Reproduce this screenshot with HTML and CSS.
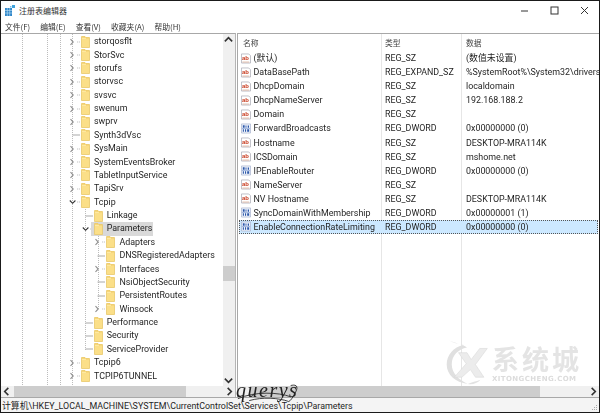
FILE: index.html
```html
<!DOCTYPE html>
<html lang="zh-CN">
<head>
<meta charset="utf-8">
<title>注册表编辑器</title>
<link rel="stylesheet" href="styles.css">
</head>
<body>
<svg class="defs" aria-hidden="true">
  <symbol id="folder" viewBox="0 0 9 12">
    <path d="M0.5 0.5H4L5 1.5H8.5V11.5H0.5Z" fill="#fde9a3" stroke="#e8c667" stroke-width="0.8"/>
    <path d="M1 3H8V11H1Z" fill="#fbdf88"/>
    <path d="M1 1.2H4L5 2.2H8" fill="none" stroke="#f3c95e" stroke-width="0.8"/>
  </symbol>
  <symbol id="closed" viewBox="0 0 13 12">
    <path d="M2.5 3.2L5.2 6L2.5 8.8" fill="none" stroke="#8f8f8f" stroke-width="1.1"/>
    <path d="M9.2 6H12" stroke="#b5b5b5" stroke-width="1" stroke-dasharray="1 1"/>
  </symbol>
  <symbol id="open" viewBox="0 0 13 12">
    <path d="M1.8 4.5L4.6 7.3L7.4 4.5" fill="none" stroke="#333" stroke-width="1.1"/>
    <path d="M9.2 6H12" stroke="#b5b5b5" stroke-width="1" stroke-dasharray="1 1"/>
  </symbol>
  <symbol id="leaf" viewBox="0 0 13 12">
    <path d="M4.5 6H12" stroke="#a9a9a9" stroke-width="1"/>
  </symbol>
  <symbol id="ab" viewBox="0 0 11 11">
    <path d="M0.5 0.5H8.5L10.5 2.5V10.5H0.5Z" fill="#fff" stroke="#a9a9b5" stroke-width="0.8"/>
    <text x="1" y="7.6" class="ab-text">ab</text>
    <path d="M1.5 9.4H9" stroke="#d9a58c" stroke-width="0.8"/>
  </symbol>
  <symbol id="dw" viewBox="0 0 11 11">
    <path d="M0.5 0.5H10.5V10.5H0.5Z" fill="#eef3fb" stroke="#a9b5cf" stroke-width="0.8"/>
    <path d="M2 2H4V4.6H2ZM5 2.3H6V4.6H5ZM7.4 2.3H8.8V4.6H7.4ZM2 6.4H3.2V9H2ZM4.4 6.4H5.6V9H4.4ZM6.8 6.4H9V9H6.8Z" fill="#2a56a8"/>
    <path d="M1 5.5H10" stroke="#7d9ad0" stroke-width="0.7"/>
  </symbol>
</svg>

<div class="window">
  <header class="titlebar">
    <svg class="app-icon" viewBox="0 0 10 11">
      <rect x="0" y="3" width="7" height="8" fill="#2f86c9"/>
      <path d="M0 5.5H7M0 8H7M2.3 3V11M4.7 3V11" stroke="#bfe0f5" stroke-width="0.6"/>
      <rect x="7" y="0" width="3" height="3" fill="#3fa3dc"/>
      <rect x="5" y="1" width="1.5" height="1.5" fill="#74bde6"/>
    </svg>
    <span class="title">注册表编辑器</span>
    <div class="controls">
      <svg class="ctl" viewBox="0 0 9 9"><path d="M1 5H8" stroke="#333"/></svg>
      <svg class="ctl" viewBox="0 0 9 9"><rect x="1" y="1" width="7" height="7" fill="none" stroke="#333"/></svg>
      <svg class="ctl" viewBox="0 0 9 9"><path d="M1 1L8 8M8 1L1 8" stroke="#333"/></svg>
    </div>
  </header>
  <nav class="menubar">
    <span>文件(F)</span><span>编辑(E)</span><span>查看(V)</span><span>收藏夹(A)</span><span>帮助(H)</span>
  </nav>

  <main class="panes">
    <section class="tree-pane">
      <div class="tree-body">
        <div class="tree">
          <div class="node l0"><svg class="exp"><use href="#closed"/></svg><span class="item"><svg class="fld"><use href="#folder"/></svg>storqosflt</span></div>
          <div class="node l0"><svg class="exp"><use href="#closed"/></svg><span class="item"><svg class="fld"><use href="#folder"/></svg>StorSvc</span></div>
          <div class="node l0"><svg class="exp"><use href="#closed"/></svg><span class="item"><svg class="fld"><use href="#folder"/></svg>storufs</span></div>
          <div class="node l0"><svg class="exp"><use href="#closed"/></svg><span class="item"><svg class="fld"><use href="#folder"/></svg>storvsc</span></div>
          <div class="node l0"><svg class="exp"><use href="#closed"/></svg><span class="item"><svg class="fld"><use href="#folder"/></svg>svsvc</span></div>
          <div class="node l0"><svg class="exp"><use href="#closed"/></svg><span class="item"><svg class="fld"><use href="#folder"/></svg>swenum</span></div>
          <div class="node l0"><svg class="exp"><use href="#closed"/></svg><span class="item"><svg class="fld"><use href="#folder"/></svg>swprv</span></div>
          <div class="node l0"><svg class="exp"><use href="#leaf"/></svg><span class="item"><svg class="fld"><use href="#folder"/></svg>Synth3dVsc</span></div>
          <div class="node l0"><svg class="exp"><use href="#closed"/></svg><span class="item"><svg class="fld"><use href="#folder"/></svg>SysMain</span></div>
          <div class="node l0"><svg class="exp"><use href="#closed"/></svg><span class="item"><svg class="fld"><use href="#folder"/></svg>SystemEventsBroker</span></div>
          <div class="node l0"><svg class="exp"><use href="#closed"/></svg><span class="item"><svg class="fld"><use href="#folder"/></svg>TabletInputService</span></div>
          <div class="node l0"><svg class="exp"><use href="#closed"/></svg><span class="item"><svg class="fld"><use href="#folder"/></svg>TapiSrv</span></div>
          <div class="node l0"><svg class="exp"><use href="#open"/></svg><span class="item"><svg class="fld"><use href="#folder"/></svg>Tcpip</span></div>
          <div class="group g1">
            <div class="node l1"><svg class="exp"><use href="#leaf"/></svg><span class="item"><svg class="fld"><use href="#folder"/></svg>Linkage</span></div>
            <div class="node l1"><svg class="exp"><use href="#open"/></svg><span class="item selected"><svg class="fld"><use href="#folder"/></svg>Parameters</span></div>
            <div class="group g2">
              <div class="node l2"><svg class="exp"><use href="#closed"/></svg><span class="item"><svg class="fld"><use href="#folder"/></svg>Adapters</span></div>
              <div class="node l2"><svg class="exp"><use href="#leaf"/></svg><span class="item"><svg class="fld"><use href="#folder"/></svg>DNSRegisteredAdapters</span></div>
              <div class="node l2"><svg class="exp"><use href="#closed"/></svg><span class="item"><svg class="fld"><use href="#folder"/></svg>Interfaces</span></div>
              <div class="node l2"><svg class="exp"><use href="#leaf"/></svg><span class="item"><svg class="fld"><use href="#folder"/></svg>NsiObjectSecurity</span></div>
              <div class="node l2"><svg class="exp"><use href="#leaf"/></svg><span class="item"><svg class="fld"><use href="#folder"/></svg>PersistentRoutes</span></div>
              <div class="node l2"><svg class="exp"><use href="#closed"/></svg><span class="item"><svg class="fld"><use href="#folder"/></svg>Winsock</span></div>
            </div>
            <div class="node l1"><svg class="exp"><use href="#leaf"/></svg><span class="item"><svg class="fld"><use href="#folder"/></svg>Performance</span></div>
            <div class="node l1"><svg class="exp"><use href="#leaf"/></svg><span class="item"><svg class="fld"><use href="#folder"/></svg>Security</span></div>
            <div class="node l1"><svg class="exp"><use href="#leaf"/></svg><span class="item"><svg class="fld"><use href="#folder"/></svg>ServiceProvider</span></div>
          </div>
          <div class="node l0"><svg class="exp"><use href="#closed"/></svg><span class="item"><svg class="fld"><use href="#folder"/></svg>Tcpip6</span></div>
          <div class="node l0"><svg class="exp"><use href="#closed"/></svg><span class="item"><svg class="fld"><use href="#folder"/></svg>TCPIP6TUNNEL</span></div>
        </div>
        <div class="vscroll">
          <svg class="arrow" viewBox="0 0 9 9"><path d="M1.5 6L4.5 3L7.5 6" fill="none" stroke="#333" stroke-width="1.3"/></svg>
          <div class="vtrack"><div class="vthumb"></div></div>
          <svg class="arrow" viewBox="0 0 9 9"><path d="M1.5 3L4.5 6L7.5 3" fill="none" stroke="#333" stroke-width="1.3"/></svg>
        </div>
      </div>
      <div class="hscroll tree-h">
        <svg class="arrow" viewBox="0 0 9 9"><path d="M6 1.5L3 4.5L6 7.5" fill="none" stroke="#333" stroke-width="1.3"/></svg>
        <div class="htrack"><div class="hthumb"></div></div>
        <svg class="arrow" viewBox="0 0 9 9"><path d="M3 1.5L6 4.5L3 7.5" fill="none" stroke="#333" stroke-width="1.3"/></svg>
      </div>
    </section>

    <section class="list-pane">
      <div class="list">
        <div class="list-row list-head"><span class="cjk">名称</span><span class="cjk">类型</span><span class="cjk">数据</span></div>
        <div class="list-row"><span class="name"><svg class="ico"><use href="#ab"/></svg>(默认)</span><span>REG_SZ</span><span>(数值未设置)</span></div>
        <div class="list-row"><span class="name"><svg class="ico"><use href="#ab"/></svg>DataBasePath</span><span>REG_EXPAND_SZ</span><span>%SystemRoot%\System32\drivers\</span></div>
        <div class="list-row"><span class="name"><svg class="ico"><use href="#ab"/></svg>DhcpDomain</span><span>REG_SZ</span><span>localdomain</span></div>
        <div class="list-row"><span class="name"><svg class="ico"><use href="#ab"/></svg>DhcpNameServer</span><span>REG_SZ</span><span>192.168.188.2</span></div>
        <div class="list-row"><span class="name"><svg class="ico"><use href="#ab"/></svg>Domain</span><span>REG_SZ</span><span></span></div>
        <div class="list-row"><span class="name"><svg class="ico"><use href="#dw"/></svg>ForwardBroadcasts</span><span>REG_DWORD</span><span>0x00000000 (0)</span></div>
        <div class="list-row"><span class="name"><svg class="ico"><use href="#ab"/></svg>Hostname</span><span>REG_SZ</span><span>DESKTOP-MRA114K</span></div>
        <div class="list-row"><span class="name"><svg class="ico"><use href="#ab"/></svg>ICSDomain</span><span>REG_SZ</span><span>mshome.net</span></div>
        <div class="list-row"><span class="name"><svg class="ico"><use href="#dw"/></svg>IPEnableRouter</span><span>REG_DWORD</span><span>0x00000000 (0)</span></div>
        <div class="list-row"><span class="name"><svg class="ico"><use href="#ab"/></svg>NameServer</span><span>REG_SZ</span><span></span></div>
        <div class="list-row"><span class="name"><svg class="ico"><use href="#ab"/></svg>NV Hostname</span><span>REG_SZ</span><span>DESKTOP-MRA114K</span></div>
        <div class="list-row"><span class="name"><svg class="ico"><use href="#dw"/></svg>SyncDomainWithMembership</span><span>REG_DWORD</span><span>0x00000001 (1)</span></div>
        <div class="list-row current"><span class="name"><svg class="ico"><use href="#dw"/></svg>EnableConnectionRateLimiting</span><span>REG_DWORD</span><span>0x00000000 (0)</span></div>
      </div>
      <div class="hscroll list-h">
        <div class="htrack"><div class="hthumb"></div></div>
        <svg class="arrow" viewBox="0 0 9 9"><path d="M3 1.5L6 4.5L3 7.5" fill="none" stroke="#333" stroke-width="1.3"/></svg>
      </div>
    </section>
  </main>

  <footer class="statusbar">
    <span>计算机\HKEY_LOCAL_MACHINE\SYSTEM\CurrentControlSet\Services\Tcpip\Parameters</span>
    <svg class="grip" viewBox="0 0 8 8"><path d="M6 1h1v1H6zM4 3h1v1H4zM6 3h1v1H6zM2 5h1v1H2zM4 5h1v1H4zM6 5h1v1H6z" fill="#aaa"/></svg>
  </footer>
</div>

<div class="signature">
  <span class="sig-text">querys</span>
  <svg class="sig-line" viewBox="0 0 70 20"><path d="M2 15C20 7 45 8 58 13M58 1C66 -1 66 4 62 10C60 14 58 17 56 18M14 17C28 13 45 14 56 18" fill="none" stroke="#222" stroke-width="0.9"/></svg>
</div>

<div class="watermark">
  <svg class="wm-logo" viewBox="0 0 52 56">
    <path d="M4 2C10 6 16 6 22 8C10 10 2 20 2 31C2 43 12 52 27 54C16 49 8 41 8 31C8 20 16 13 26 11C22 7 12 6 4 2Z" fill="#e0e0e0"/>
    <path d="M27 54C33 55 38 53 42 49C36 51 32 52 27 54Z" fill="#e2e2e2"/>
    <path d="M16 17H26L31 25L41 12H50L36 31L46 46H36L30 37L20 46H11L25 30Z" fill="#ececec" stroke="#d6d6d6" stroke-width="0.6"/>
  </svg>
  <div class="wm-text">
    <span class="wm-cn">系统城</span>
    <span class="wm-en">XITONGCHENG.COM</span>
  </div>
</div>
</body>
</html>
```

FILE: styles.css
```css
* { box-sizing: border-box; }
html, body { margin: 0; padding: 0; background: #fff; }
body {
  width: 600px;
  height: 413px;
  position: relative;
  overflow: hidden;
  font-family: Roboto, "Noto Sans CJK SC", sans-serif;
  font-size: 8.9px;
  color: #1f1f1f;
}
.defs { position: absolute; width: 0; height: 0; }
.ab-text { font: bold 6.5px "Liberation Sans", sans-serif; fill: #c8391c; }

.window {
  width: 600px;
  height: 413px;
  display: flex;
  flex-direction: column;
  border: 1px solid #1a1a1a;
  filter: blur(0.3px);
}

.titlebar {
  height: 19px;
  flex: none;
  display: flex;
  align-items: center;
  padding-left: 4px;
  background: #fff;
}
.app-icon { width: 10px; height: 11px; margin-right: 4px; }
.title { font: 8px/11px "Noto Sans CJK SC", sans-serif; color: #333; }
.controls { margin-left: auto; display: flex; gap: 21px; padding-right: 10px; }
.ctl { width: 9px; height: 9px; }

.menubar {
  height: 13px;
  flex: none;
  display: flex;
  gap: 10px;
  align-items: center;
  padding-left: 4px;
  font: 7.8px/11px "Noto Sans CJK SC", sans-serif;
  color: #333;
}

.panes { flex: 1; display: flex; min-height: 0; }

.tree-pane {
  width: 235px;
  flex: none;
  display: flex;
  flex-direction: column;
  border-top: 1px solid #a8a8a8;
  border-right: 1px solid #b5b5b5;
}
.tree-body { flex: 1; display: flex; min-height: 0; }
.tree {
  flex: 1;
  padding-top: 1px;
  overflow: hidden;
  background-image:
    repeating-linear-gradient(#bcbcbc 0 1px, transparent 1px 2px),
    repeating-linear-gradient(#bcbcbc 0 1px, transparent 1px 2px),
    repeating-linear-gradient(#bcbcbc 0 1px, transparent 1px 2px),
    repeating-linear-gradient(#bcbcbc 0 1px, transparent 1px 2px);
  background-size: 1px 100%;
  background-repeat: no-repeat;
  background-position: 21px 0, 46px 0, 59px 0, 71px 0;
}
.group {
  background-image: repeating-linear-gradient(#bcbcbc 0 1px, transparent 1px 2px);
  background-repeat: no-repeat;
  background-size: 1px calc(100% - 6px);
}
.g1 { background-position: 84px 0; }
.g2 { background-position: 97px 0; }
.node {
  height: 13.38px;
  display: flex;
  align-items: center;
  white-space: nowrap;
  line-height: 13px;
}
.l0 { padding-left: 67px; }
.l1 { padding-left: 79.7px; }
.l2 { padding-left: 92.4px; }
.exp { width: 13px; height: 12px; flex: none; }
.item { display: inline-flex; align-items: center; gap: 4px; height: 13.38px; }
.selected { background: #d9d9d9; margin-left: -2.3px; padding: 0 1px 0 2.3px; }
.fld { width: 9px; height: 12px; flex: none; }

.vscroll {
  width: 12px;
  flex: none;
  display: flex;
  flex-direction: column;
  background: #f0f0f0;
}
.arrow { width: 11px; height: 11px; flex: none; }
.vtrack { flex: 1; padding-top: 221px; }
.vthumb { height: 15px; background: #cdcdcd; }

.hscroll {
  height: 11px;
  flex: none;
  display: flex;
  align-items: center;
  background: #f0f0f0;
}
.htrack { flex: 1; height: 100%; }
.tree-h .hthumb { width: 172px; height: 100%; margin-left: 2px; background: #cdcdcd; }
.list-h .hthumb { width: 290px; height: 100%; margin-left: 12px; background: #cdcdcd; }

.list-pane {
  flex: 1;
  min-width: 0;
  margin-left: 1px;
  display: flex;
  flex-direction: column;
  border: 1px solid #a8a8a8;
  border-bottom: 0;
  border-right: 0;
}
.list {
  flex: 1;
  overflow: hidden;
  background-image: linear-gradient(#e6e6e6, #e6e6e6), linear-gradient(#e6e6e6, #e6e6e6);
  background-size: 1px 100%;
  background-repeat: no-repeat;
  background-position: 143px 0, 223px 0;
}
.list-row {
  height: 14.08px;
  display: grid;
  grid-template-columns: 147px 81px 1fr;
  align-items: center;
  white-space: nowrap;
  line-height: 14px;
  overflow: hidden;
}
.list-head { height: 17px; }
.list-head span:first-child { padding-left: 5px; }
.cjk { font: 7.8px/11px "Noto Sans CJK SC", sans-serif; color: #444; }
.name { display: flex; align-items: center; gap: 2.5px; padding-left: 3px; }
.ico { width: 10px; height: 11px; flex: none; }
.current {
  background: #cce8ff;
  outline: 1px dotted #555;
  outline-offset: -1px;
  margin: 0 1px;
  grid-template-columns: 146px 81px 1fr;
}
.current .name { padding-left: 2px; }

.statusbar {
  height: 15px;
  flex: none;
  display: flex;
  align-items: center;
  justify-content: space-between;
  padding: 0 1px;
  border-top: 1px solid #a8a8a8;
  background: #f4f4f4;
  white-space: nowrap;
}
.grip { width: 8px; height: 8px; align-self: flex-end; }

.signature {
  position: absolute;
  left: 236px;
  top: 382px;
  width: 66px;
  height: 22px;
}
.sig-text {
  font: italic 20px "Liberation Serif", serif;
  letter-spacing: 1.5px;
  color: #222;
  line-height: 16px;
}
.sig-line { position: absolute; left: 0; top: 2px; width: 66px; height: 20px; }

.watermark {
  position: absolute;
  left: 445px;
  top: 337px;
  display: flex;
  gap: 3px;
  align-items: center;
  pointer-events: none;
}
.wm-logo { width: 44px; height: 50px; }
.wm-text { display: flex; flex-direction: column; gap: 3px; padding-top: 4px; }
.wm-cn {
  font: bold 27px/26px "Noto Sans CJK SC", sans-serif;
  letter-spacing: 3px;
  color: #e4e4e4;
}
.wm-en {
  font: bold 7px/8px "DejaVu Sans", sans-serif;
  letter-spacing: 0.4px;
  color: #dcdcdc;
}
```
